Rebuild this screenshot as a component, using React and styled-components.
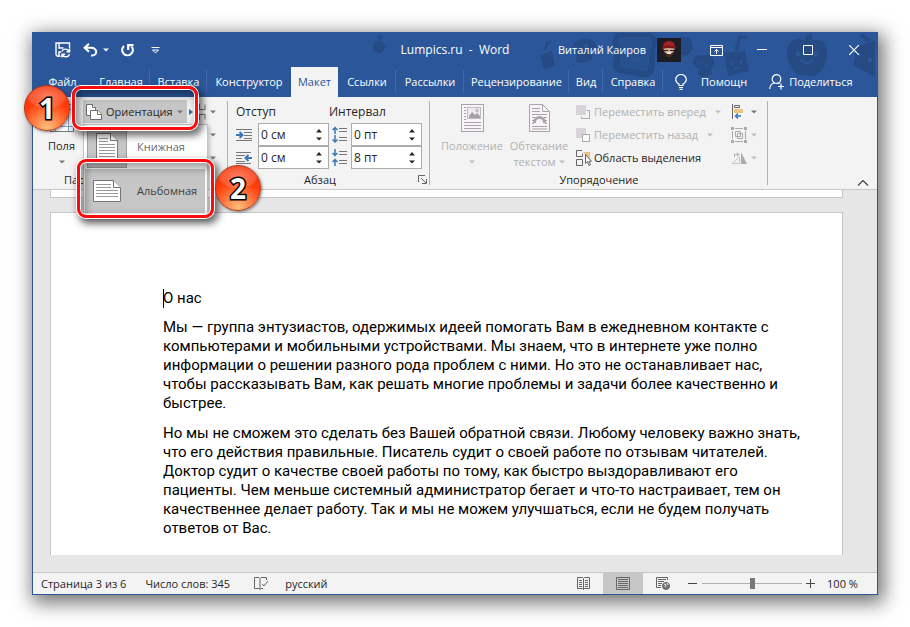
import React, { useState } from 'react'
import styled, { createGlobalStyle, css } from 'styled-components';

const GlobalStyle = createGlobalStyle`
    * { box-sizing: border-box; }
    body {
        margin: 0;
        background: #fff;
        font-family: "Open Sans", "Noto Sans", sans-serif;
        font-size: 11px;
        line-height: 16px;
        color: #262626;
    }
    button, input {
        font: inherit;
        color: inherit;
        margin: 0;
        padding: 0;
        border: none;
        background: none;
    }
    svg { display: block; flex: none; }
    p, h1 { margin: 0; font: inherit; }
`;

const Desktop = styled.div`
    padding: 32px;
`;

const Window = styled.div`
    display: flex;
    flex-direction: column;
    border: 1px solid #2b579a;
    background: #e6e6e6;
    box-shadow: 3px 5px 18px 3px rgba(0, 0, 0, 0.55);
`;

const Header = styled.header`
    position: relative;
    background: #2b579a;
    color: white;
`;

const Pattern = styled.svg`
    position: absolute;
    top: 0;
    right: 0;
`;

const TitleBar = styled.div`
    position: relative;
    display: grid;
    grid-template-columns: 1fr auto 1fr;
    align-items: center;
    height: 34px;
`;

const DocTitle = styled.span`
    font-size: 12px;
`;

const QuickAccess = styled.div`
    display: flex;
    align-items: center;
    padding-left: 20px;
`;

const QuickButton = styled.button`
    display: flex;
    align-items: center;
    justify-content: center;
    gap: 5px;
    width: ${props => props.$width || '32px'};
    height: 30px;
`;

const WindowSide = styled.div`
    display: flex;
    align-items: center;
    justify-content: flex-end;
`;

const Avatar = styled.svg`
    margin: 0 12px 0 11px;
`;

const CaptionButton = styled.button`
    display: flex;
    align-items: center;
    justify-content: center;
    width: 46px;
    height: 32px;
`;

const Tabs = styled.nav`
    position: relative;
    display: flex;
    height: 30px;
`;

const Tab = styled.button`
    position: relative;
    width: ${props => props.$width}px;
    white-space: nowrap;

    ${props => props.$line && css`
        &::after {
            content: '';
            position: absolute;
            right: 0;
            top: 3px;
            height: 22px;
            border-right: 1px solid #416aa8;
        }
    `}

    ${props => props.$active && css`
        background: #f3f3f3;
        color: #2b579a;
    `}
`;

const TabAction = styled.button`
    display: flex;
    align-items: center;
    gap: ${props => props.$gap};
    padding-left: ${props => props.$left};
    white-space: nowrap;
`;

const Ribbon = styled.div`
    display: flex;
    height: 93px;
    background: #f3f3f3;
    border-bottom: 1px solid #c6c6c6;
`;

const Group = styled.section`
    position: relative;
    display: flex;
    flex-direction: column;
    width: ${props => props.$width}px;
    padding-top: 3px;

    &::after {
        content: '';
        position: absolute;
        right: 0;
        top: 4px;
        height: 84px;
        border-right: 1px solid #b1b1b1;
    }
`;

const GroupBody = styled.div`
    display: flex;
    height: 72px;
    padding-left: ${props => props.$left || '0'};
`;

const GroupFooter = styled.div`
    position: relative;
    display: flex;
    justify-content: center;
    align-items: center;
    height: 18px;
    padding-right: ${props => props.$right || '0'};
`;

const Launcher = styled.button`
    position: absolute;
    right: 3px;
    top: 4px;
`;

const BigButton = styled.button`
    display: flex;
    flex-direction: column;
    align-items: center;
    width: ${props => props.$width}px;
    padding-top: 4px;
    white-space: nowrap;
    color: ${props => (props.disabled ? '#b1b1b1' : '#262626')};
`;

const BigIcon = styled.span`
    height: 34px;
`;

const BigArrow = styled.span`
    display: flex;
    align-items: center;
    gap: 3px;
    height: 16px;
`;

const Column = styled.div`
    display: flex;
    flex-direction: column;
    width: ${props => props.$width}px;
    margin-left: ${props => props.$left || '0'};
`;

const SmallButton = styled.button`
    display: flex;
    align-items: center;
    gap: ${props => props.$gap || '4px'};
    height: 23px;
    white-space: nowrap;
    color: ${props => (props.disabled ? '#b1b1b1' : '#262626')};
`;

const ArrowSlot = styled.span`
    margin-left: 5px;
`;

const BreakSpace = styled.span`
    width: 21px;
`;

const MenuAnchor = styled.div`
    position: relative;
    z-index: 3;
`;

const OrientationButton = styled(SmallButton)`
    width: 104px;
    padding-left: 3px;
    background: #c6c6c6;
`;

const Menu = styled.div`
    position: absolute;
    top: 24px;
    left: 0;
    width: 125px;
    padding: 0 2px 4px 1px;
    background: white;
    border: 1px solid #c6c6c6;
    box-shadow: 2px 2px 4px rgba(0, 0, 0, 0.2);
`;

const MenuItem = styled.button`
    display: flex;
    align-items: center;
    gap: 10px;
    width: 100%;
    height: 44px;
    padding-left: 2px;
    white-space: nowrap;
    color: ${props => (props.$hover ? '#404040' : '#6a6a6a')};
    background: ${props => (props.$hover ? '#c6c6c6' : 'white')};
`;

const MenuIcon = styled.span`
    display: flex;
    align-items: center;
    justify-content: center;
    width: 40px;
    height: 42px;
    background: #c6c6c6;
    border: 1px solid ${props => (props.$current ? '#a0a0a0' : '#c6c6c6')};
`;

const Callout = styled.div`
    position: absolute;
    z-index: 4;
    left: ${props => props.$left}px;
    top: ${props => props.$top}px;
    width: ${props => props.$width}px;
    height: ${props => props.$height}px;
    border: 3px solid #f80c0c;
    border-radius: 9px;
    pointer-events: none;
    box-shadow: 0 0 0 1px white, 3px 4px 7px 2px rgba(0, 0, 0, 0.55),
        inset 0 0 0 1px white, inset 3px 4px 8px 2px rgba(0, 0, 0, 0.4);
`;

const Badge = styled.span`
    position: absolute;
    left: ${props => props.$left}px;
    top: ${props => props.$top}px;
    display: flex;
    align-items: center;
    justify-content: center;
    width: 46px;
    height: 46px;
    border-radius: 50%;
    border: 1px solid #b5371c;
    color: white;
    font-size: 28px;
    font-weight: 700;
    -webkit-text-stroke: 3px black;
    paint-order: stroke fill;
    background:
        radial-gradient(ellipse 20px 12px at 50% 24%, rgba(255, 255, 255, 0.35), rgba(255, 255, 255, 0.15) 90%, transparent),
        radial-gradient(circle at 50% 95%, #ffc07c 0, #ff8248 28%, #ff3d0a 58%, #ee2c05 100%);
    box-shadow: 1px 1px 3px rgba(0, 0, 0, 0.5);
`;

const Spacing = styled.div`
    display: grid;
    grid-template-columns: 22px 71px 22px 71px;
    grid-template-rows: 23px 23px 23px;
    align-items: center;
`;

const SpacingTitle = styled.span`
    grid-column: span 2;
    font-size: 12px;
`;

const LineGapCell = styled.span`
    padding-left: 3px;
`;

const SpinBox = styled.div`
    display: flex;
    height: 23px;
    border: 1px solid #ababab;
    background: white;
    font-size: 12px;

    input {
        width: 57px;
        padding-left: 2px;
        outline: none;
    }
`;

const SpinArrows = styled.div`
    display: flex;
    flex-direction: column;
    justify-content: space-between;
    padding: 4px 0;

    button {
        display: block;
        width: 12px;
        height: 5px;
        line-height: 0;
    }
`;

const Collapse = styled.button`
    align-self: flex-end;
    margin: 0 8px 3px auto;
`;

const DocArea = styled.main`
    padding: 0 34px 17px 17px;
`;

const PrevPage = styled.div`
    height: 8px;
    background: white;
    border: 1px solid #c6c6c6;
    border-top: none;
`;

const Page = styled.article`
    margin-top: 14px;
    padding: 76px 56px 17px 112px;
    background: white;
    border: 1px solid #c6c6c6;
    border-bottom: none;
    color: #000;
    font-family: Roboto, "Noto Sans", sans-serif;
    font-size: 15px;
    line-height: 19px;
    white-space: nowrap;

    p { margin-top: 11px; }
    h1 + p { margin-top: 10px; }
`;

const Caret = styled.span`
    position: absolute;
    height: 19px;
    border-left: 1px solid black;
`;

const StatusBar = styled.footer`
    display: flex;
    align-items: center;
    height: 22px;
    padding: 0 19px 0 8px;
    background: #f3f3f3;
    border-top: 1px solid #c6c6c6;
    white-space: nowrap;
`;

const StatusItem = styled.button`
    margin-right: ${props => props.$right || '19px'};
    text-align: left;
`;

const ViewButton = styled.button`
    display: flex;
    align-items: center;
    justify-content: center;
    width: 40px;
    height: 21px;
    background: ${props => (props.$active ? '#c6c6c6' : 'transparent')};
`;

const ViewButtons = styled.div`
    display: flex;
    margin-left: auto;
`;

const ZoomButton = styled.button`
    width: 9px;
    margin-left: ${props => props.$left};
`;

const ZoomRange = styled.input`
    appearance: none;
    width: 100px;
    height: 12px;
    margin-left: 5px;
    background: linear-gradient(#b1b1b1, #b1b1b1) center / 100% 1px no-repeat;

    &::-webkit-slider-thumb {
        appearance: none;
        width: 5px;
        height: 11px;
        background: #777;
    }
`;

const ZoomValue = styled.button`
    width: 31px;
    margin-left: 12px;
`;

const Down = ({ color = '#777' }) => (
    <svg width="6" height="4" viewBox="0 0 6 4"><path d="M0 0.5h6L3 3.5z" fill={color} /></svg>
);

const SaveIcon = () => (
    <svg width="16" height="16" viewBox="0 0 16 16" fill="none" stroke="white" strokeWidth="1.4">
        <path d="M5.5 14.3H2.5L1 12.8V1h13.5v5" />
        <path d="M4 1v5h4.5M4 14v-4h2" />
        <path d="M6.8 9.6a4 4 0 0 1 7.2-.4M14.6 6.4v3.4h-3.2M14.6 12.2a4 4 0 0 1-7.2.6M7 15.6v-3.4h3.2" />
    </svg>
);

const UndoIcon = () => (
    <svg width="15" height="14" viewBox="0 0 15 14" fill="none" stroke="white" strokeWidth="2">
        <path d="M6 0.8L1.6 4.8 6 8.8M2 4.8h6.5a4.6 3.8 0 0 1 0 7.8H8" />
    </svg>
);

const RedoIcon = () => (
    <svg width="15" height="15" viewBox="0 0 15 15" fill="none" stroke="white" strokeWidth="2.2">
        <path d="M4 3A5.3 5.3 0 1 0 11.6 3.6" />
        <path d="M8.2 7V2.1h5.3" />
    </svg>
);

const CustomizeIcon = () => (
    <svg width="9" height="7" viewBox="0 0 9 7" fill="none" stroke="white"><path d="M0.5 0.5h8M1.5 3l3 3 3-3z" /></svg>
);

const BackPattern = () => (
    <Pattern width="510" height="46" viewBox="368 33 510 46" fill="#254a84" stroke="none" aria-hidden="true">
        <circle cx="380" cy="47" r="6" /><path d="M379 35l5 1-3 6z" />
        <path d="M541 55l12-4 3 14-11 5z" /><path d="M545 50l2-8 5-1v2l-3 1-2 7z" />
        <path d="M574 44q8-8 19-4 9 6 1 12l-1 7q-10 6-16 3l1-9q-6-4-4-9z" />
        <path d="M617 33h34q10 5 5 17l-1 22q-4 7-12 5l-23-4q-8-3-6-12l3-11q-6-9 0-17z" />
        <path d="M620 37h30q6 5 2 12l-2 18q-2 6-9 4l-16-3q-6-2-4-9l3-10q-8-6-4-12z" fill="#2b579a" opacity="0.55" />
        <path d="M680 38q12-4 14 8-1 9-9 10l-4-2z" />
        <path d="M694 60q3-7 10-4 9-4 11 5 0 5-3 7l1 6q-7 5-14 1l1-6q-7-3-6-9z" />
        <path d="M725 53l21-2 4 20-21 5z" /><path d="M735 51l5-16 8 1-1 3-5-1-3 13z" />
        <path d="M790 44q7-8 16-3 0-6 7-8l1 5-4 4q10-5 17 3 4 19-8 29-4 4-12 1-10 2-16-9-6-12-1-22z" />
        <path d="M858 47l18-6v36l-22-12zM868 42l-7-6 2-3 10 7z" />
        <g fill="#2b579a">
            <circle cx="577" cy="49" r="2" /><circle cx="587" cy="46" r="2" />
            <circle cx="631" cy="50" r="2.5" /><circle cx="644" cy="52" r="2.5" />
            <circle cx="700" cy="64" r="1.5" /><circle cx="708" cy="66" r="1.5" />
            <circle cx="733" cy="64" r="1.5" /><circle cx="742" cy="62" r="1.5" />
            <circle cx="799" cy="54" r="2.5" /><circle cx="817" cy="54" r="2.5" />
            <circle cx="861" cy="55" r="2" /><circle cx="871" cy="60" r="2" />
        </g>
        <path d="M802 60q6 6 12 0M634 58q4 4 8 1M735 68q3 2 6-1" fill="none" stroke="#2b579a" strokeWidth="2" />
    </Pattern>
);

const UserPicture = () => (
    <Avatar width="24" height="24" viewBox="0 0 24 24" aria-hidden="true">
        <rect width="24" height="24" fill="#1d1c22" />
        <path d="M6 9q0-6 6-6 6 0 6 6z" fill="#a32424" />
        <path d="M6 10h12l-2 5H8z" fill="#c9a48c" />
        <path d="M5 9q7-3 14 0v2q-7-2-14 0z" fill="#7b1717" />
        <path d="M7 12h4v1H7zM13 12h4v1h-4z" fill="#302424" />
        <path d="M8 15q4-2 8 0l-1 3-3 2-3-2z" fill="#4a2a20" />
        <path d="M9 14q3-1 6 0l-1 2h-4z" fill="#e8dcd4" />
    </Avatar>
);

const MarginsIcon = () => (
    <svg width="24" height="28" viewBox="0 0 24 28" fill="white" stroke="#777">
        <rect x="0.5" y="0.5" width="23" height="27" /><path d="M5.5 1v26M18.5 1v26M1 5.5h22M1 22.5h22" stroke="#7ba3cf" />
    </svg>
);

const PagesIcon = () => (
    <svg width="16" height="16" viewBox="0 0 16 16" fill="white" stroke="#6d6d6d">
        <path d="M0.5 0.5h6l3 3v8h-9z" /><path d="M6.5 0.5v3h3" />
        <path d="M4.5 6.5h7.5l3.5 3.5v5.5h-11z" /><path d="M11.5 6.5v4h4" />
    </svg>
);

const PortraitPage = () => (
    <svg width="22" height="28" viewBox="0 0 22 28" fill="white" stroke="#777">
        <path d="M0.5 0.5h14l7 7v20h-21z" /><path d="M14.5 0.5v7h7" />
        <path d="M3 5.5h9M3 8.5h9M3 11.5h16M3 14.5h16M3 17.5h16M3 20.5h16M3 23.5h16" stroke="#999" />
    </svg>
);

const LandscapePage = () => (
    <svg width="28" height="22" viewBox="0 0 28 22" fill="white" stroke="#777">
        <path d="M0.5 0.5h20l7 7v14h-27z" /><path d="M20.5 0.5v7h7" />
        <path d="M3 4.5h15M3 7.5h15M3 10.5h22M3 13.5h22M3 16.5h22" stroke="#999" />
    </svg>
);

const BreaksIcon = () => (
    <svg width="17" height="16" viewBox="0 0 17 16" fill="none" stroke="#777">
        <path d="M7 5.5h9v-5M10.5 0v5M7 10.5h9v5M10.5 16v-5" /><path d="M0 5l4 3-4 3z" fill="#2f74b5" stroke="none" />
    </svg>
);

const IndentIcon = ({ right }) => (
    <svg width="16" height="14" viewBox="0 0 16 14" fill="none" stroke="#777">
        {right
            ? <path d="M0 1.5h15M0 4.5h9M0 7.5h6M0 10.5h9M0 12.5h15" />
            : <path d="M0 1.5h16M8 4.5h8M8 7.5h8M8 10.5h8M0 12.5h16" />}
        {right
            ? <path d="M16 7h-6M12.5 4L9.5 7l3 3" stroke="#3a78b8" strokeWidth="2" />
            : <path d="M0 7h6M3.5 4l3 3-3 3" stroke="#3a78b8" strokeWidth="2" />}
    </svg>
);

const LineGapIcon = ({ after }) => (
    <svg width="16" height="18" viewBox="0 0 16 18" fill="none" stroke="#777">
        <path d="M7 2.5h8M7 5.5h8M7 11.5h8M7 14.5h8" />
        {after
            ? <path d="M3 0v6.5M0.5 4L3 6.5 5.5 4M3 17v-6.5M0.5 13L3 10.5 5.5 13" stroke="#3a78b8" strokeWidth="1.5" />
            : <path d="M3 8V1.5M0.5 4L3 1.5 5.5 4M3 9v7M0.5 13.5L3 16l2.5-2.5" stroke="#3a78b8" strokeWidth="1.5" />}
    </svg>
);

const PositionIcon = () => (
    <svg width="23" height="28" viewBox="0 0 23 28" fill="none" stroke="#aaa4aa">
        <rect x="0.5" y="0.5" width="22" height="27" fill="#f7f3f7" />
        <path d="M3 3.5h2M3 6.5h2M3 9.5h2M3 12.5h2M3 15.5h2M3 18.5h17M3 21.5h17M3 24.5h17" />
        <rect x="6.5" y="3.5" width="13" height="11" fill="#f0ebf0" stroke="#c0bbc0" />
        <path d="M8 14v-2l3-4 3 3 2-2 3 3v2z" fill="#a5a0a5" stroke="none" /><circle cx="16" cy="6.5" r="1.3" />
    </svg>
);

const WrapIcon = () => (
    <svg width="21" height="28" viewBox="0 0 21 28" fill="none" stroke="#aaa4aa">
        <path d="M0.5 0.5h13l7 7v20h-20z" fill="#f7f3f7" /><path d="M13.5 0.5v7h7" />
        <path d="M3 4.5h8M3 7.5h8M3 10.5h15M3 13.5h3M15 13.5h3M3 16.5h2M16 16.5h2M3 19.5h2M16 19.5h2M3 22.5h15M3 25h15" />
        <path d="M5.5 19v-1a5 4.5 0 0 1 10 0v1" strokeWidth="3" stroke="#aaa5aa" />
    </svg>
);

const ForwardIcon = () => (
    <svg width="14" height="14" viewBox="0 0 14 14" fill="none">
        <path d="M13.5 5.5v8h-8v-2M10.5 5.5h3" stroke="#aaa" /><rect width="10" height="10" fill="#d9d3d9" />
    </svg>
);

const BackwardIcon = () => (
    <svg width="14" height="14" viewBox="0 0 14 14" fill="none">
        <rect width="10" height="10" fill="#d9d3d9" /><rect x="6.5" y="6.5" width="7" height="7" fill="#f8f8f8" stroke="#aaa" />
    </svg>
);

const SelectionIcon = () => (
    <svg width="16" height="16" viewBox="0 0 16 16" fill="none" stroke="#666">
        <path d="M6 0.5H0.5v6h6v-3M0.5 9.5h6v6h-6z" /><path d="M7 2h7v7h-3L9 4z" fill="#ecc27c" stroke="none" />
        <path d="M9.5 4.5v9l2-2 1.5 4 1.5-.7-1.5-3.5h2.5z" fill="white" stroke="#555" strokeWidth="0.9" />
    </svg>
);

const AlignIcon = () => (
    <svg width="16" height="15" viewBox="0 0 16 15" fill="none" stroke="#666">
        <path d="M1.5 0v15M3.5 1.5h5v2h-5z" /><path d="M3 5h9v4H3z" fill="#ecc27c" stroke="none" />
        <path d="M10 12H4.5M7 9.5L4.5 12 7 14.5" stroke="#3a78b8" strokeWidth="1.5" />
    </svg>
);

const GroupIcon = () => (
    <svg width="16" height="16" viewBox="0 0 16 16" fill="none" stroke="#aaa">
        <path d="M4 1.5h8M4 14.5h8M1.5 4v8M14.5 4v8M4.5 4.5h5v5h-5zM6.5 6.5h5v5h-5z" />
        <path d="M0 0h3v3H0zM13 0h3v3h-3zM0 13h3v3H0zM13 13h3v3h-3z" fill="#aaa" stroke="none" />
    </svg>
);

const RotateIcon = () => (
    <svg width="16" height="12" viewBox="0 0 16 12" fill="none" stroke="#aaa">
        <path d="M1 11.5h7.5V5z" stroke="#c9c3c9" /><path d="M10 0l6 12h-6z" fill="#aaa" stroke="none" />
        <path d="M3.5 5V2.5h4M6 0.5l2 2-2 2" />
    </svg>
);

const TABS = [
    { name: 'Файл', width: 59 },
    { name: 'Главная', width: 58, line: true },
    { name: 'Вставка', width: 57, line: true },
    { name: 'Конструктор', width: 84 },
    { name: 'Макет', width: 47 },
    { name: 'Ссылки', width: 58, line: true },
    { name: 'Рассылки', width: 68, line: true },
    { name: 'Рецензирование', width: 105, line: true },
    { name: 'Вид', width: 34, line: true },
    { name: 'Справка', width: 60, line: true },
];

const SpinField = ({ label, start, unit }) => {
    const [value, setValue] = useState(start);

    return (
        <SpinBox>
            <input aria-label={label} value={`${value} ${unit}`} onChange={e => setValue(parseInt(e.target.value) || 0)} />
            <SpinArrows>
                <button aria-label="Больше" onClick={() => setValue(value + 1)}>
                    <svg width="6" height="4" viewBox="0 0 6 4"><path d="M0 3.5h6L3 0z" fill="#262626" /></svg>
                </button>
                <button aria-label="Меньше" onClick={() => setValue(value - 1)}><Down color="#262626" /></button>
            </SpinArrows>
        </SpinBox>
    );
};

const App = () => {
    const [tab, setTab] = useState('Макет');
    const [zoom, setZoom] = useState(100);

    return (
        <Desktop>
            <GlobalStyle />
            <Window>
                <Header>
                    <BackPattern />
                    <TitleBar>
                        <QuickAccess>
                            <QuickButton $width="20px" aria-label="Сохранить"><SaveIcon /></QuickButton>
                            <QuickButton $width="46px" aria-label="Отменить"><UndoIcon /><Down color="white" /></QuickButton>
                            <QuickButton $width="16px" aria-label="Повторить"><RedoIcon /></QuickButton>
                            <QuickButton $width="41px" aria-label="Настройка панели"><CustomizeIcon /></QuickButton>
                        </QuickAccess>
                        <DocTitle>Lumpics.ru&nbsp; -&nbsp; Word</DocTitle>
                        <WindowSide>
                            <span>Виталий Каиров</span>
                            <UserPicture />
                            <CaptionButton aria-label="Параметры ленты">
                                <svg width="13" height="11" viewBox="0 0 13 11" fill="none" stroke="white"><path d="M0.5 0.5h12v10H0.5zM0.5 2.5h12M6.5 9V4.5M4.5 6.5l2-2 2 2" /></svg>
                            </CaptionButton>
                            <CaptionButton aria-label="Свернуть">
                                <svg width="10" height="10" viewBox="0 0 10 10" stroke="white"><path d="M0 4.5h10" /></svg>
                            </CaptionButton>
                            <CaptionButton aria-label="Развернуть">
                                <svg width="10" height="10" viewBox="0 0 10 10" fill="none" stroke="white"><path d="M0.5 0.5h9v9h-9z" /></svg>
                            </CaptionButton>
                            <CaptionButton aria-label="Закрыть">
                                <svg width="10" height="10" viewBox="0 0 10 10" stroke="white" strokeWidth="1.2"><path d="M0 0l10 10M10 0L0 10" /></svg>
                            </CaptionButton>
                        </WindowSide>
                    </TitleBar>
                    <Tabs>
                        {TABS.map(t => (
                            <Tab key={t.name} $width={t.width} $line={t.line} $active={tab === t.name} onClick={() => setTab(t.name)}>
                                {t.name}
                            </Tab>
                        ))}
                        <TabAction $left="12px" $gap="14px">
                            <svg width="12" height="16" viewBox="0 0 12 16" fill="none" stroke="white" strokeWidth="1.2">
                                <path d="M4 11.5V10Q0.7 8 0.7 5.5a5.3 5 0 0 1 10.6 0Q11.3 8 8 10v1.5zM4 13.5h4M4.5 15.4h3" />
                            </svg>
                            Помощн
                        </TabAction>
                        <TabAction $left="22px" $gap="4px">
                            <svg width="16" height="16" viewBox="0 0 16 16" fill="none" stroke="white" strokeWidth="1.2">
                                <circle cx="7.5" cy="5" r="4.3" /><path d="M0.7 15q.5-5.5 5-6M9 9q1 .3 1.5 1M12 9.5v6M9 12.5h6" />
                            </svg>
                            Поделиться
                        </TabAction>
                    </Tabs>
                </Header>

                <Ribbon>
                    <Group $width={195}>
                        <GroupBody $left="7px">
                            <BigButton $width={43}>
                                <BigIcon><MarginsIcon /></BigIcon>
                                <span>Поля</span>
                                <BigArrow><Down /></BigArrow>
                            </BigButton>
                            <Column $width={106}>
                                <MenuAnchor>
                                    <OrientationButton aria-expanded="true"><PagesIcon />Ориентация<Down /></OrientationButton>
                                    <Menu>
                                        <MenuItem><MenuIcon $current><PortraitPage /></MenuIcon>Книжная</MenuItem>
                                        <MenuItem $hover><MenuIcon><LandscapePage /></MenuIcon>Альбомная</MenuItem>
                                    </Menu>
                                    <Callout $left={-11} $top={-14} $width={126} $height={44}><Badge $left={-51} $top={-4}>1</Badge></Callout>
                                    <Callout $left={-6} $top={59} $width={137} $height={59}><Badge $left={135} $top={3}>2</Badge></Callout>
                                </MenuAnchor>
                            </Column>
                            <Column $width={30}>
                                <SmallButton aria-label="Разрывы"><BreaksIcon /><Down /></SmallButton>
                                <SmallButton $gap="0" aria-label="Номера строк"><BreakSpace /><Down /></SmallButton>
                                <SmallButton $gap="0" aria-label="Расстановка переносов"><BreakSpace /><Down /></SmallButton>
                            </Column>
                        </GroupBody>
                        <GroupFooter $right="16px">Параметры страницы</GroupFooter>
                    </Group>

                    <Group $width={202}>
                        <GroupBody $left="8px">
                            <Spacing>
                                <SpacingTitle>Отступ</SpacingTitle>
                                <SpacingTitle>Интервал</SpacingTitle>
                                <IndentIcon />
                                <SpinField label="Отступ слева" start={0} unit="см" />
                                <LineGapCell><LineGapIcon /></LineGapCell>
                                <SpinField label="Интервал до" start={0} unit="пт" />
                                <IndentIcon right />
                                <SpinField label="Отступ справа" start={0} unit="см" />
                                <LineGapCell><LineGapIcon after /></LineGapCell>
                                <SpinField label="Интервал после" start={8} unit="пт" />
                            </Spacing>
                        </GroupBody>
                        <GroupFooter $right="18px">
                            Абзац
                            <Launcher aria-label="Параметры абзаца">
                                <svg width="9" height="9" viewBox="0 0 9 9" fill="none" stroke="#666"><path d="M0.5 7V0.5H7M3 3l5 5M8.5 4v4.5H4" /></svg>
                            </Launcher>
                        </GroupFooter>
                    </Group>

                    <Group $width={338}>
                        <GroupBody $left="8px">
                            <BigButton $width={68} disabled>
                                <BigIcon><PositionIcon /></BigIcon>
                                <span>Положение</span>
                                <BigArrow><Down color="#c0c0c0" /></BigArrow>
                            </BigButton>
                            <BigButton $width={66} disabled>
                                <BigIcon><WrapIcon /></BigIcon>
                                <span>Обтекание</span>
                                <BigArrow>текстом <Down color="#c0c0c0" /></BigArrow>
                            </BigButton>
                            <Column $width={155} $left="4px">
                                <SmallButton disabled><ForwardIcon />Переместить вперед<ArrowSlot><Down color="#c0c0c0" /></ArrowSlot></SmallButton>
                                <SmallButton disabled><BackwardIcon />Переместить назад<ArrowSlot><Down color="#c0c0c0" /></ArrowSlot></SmallButton>
                                <SmallButton $gap="2px"><SelectionIcon />Область выделения</SmallButton>
                            </Column>
                            <Column $width={26}>
                                <SmallButton aria-label="Выровнять"><AlignIcon /><Down /></SmallButton>
                                <SmallButton aria-label="Группировать" disabled><GroupIcon /><Down color="#c0c0c0" /></SmallButton>
                                <SmallButton aria-label="Повернуть" disabled><RotateIcon /><Down color="#c0c0c0" /></SmallButton>
                            </Column>
                        </GroupBody>
                        <GroupFooter>Упорядочение</GroupFooter>
                    </Group>
                    <Collapse aria-label="Свернуть ленту">
                        <svg width="12" height="6" viewBox="0 0 12 6" fill="none" stroke="#444" strokeWidth="1.2"><path d="M1 5.5l5-5 5 5" /></svg>
                    </Collapse>
                </Ribbon>

                <DocArea>
                    <PrevPage />
                    <Page>
                        <h1><Caret />О нас</h1>
                        <p>
                            Мы — группа энтузиастов, одержимых идеей помогать Вам в ежедневном контакте с<br />
                            компьютерами и мобильными устройствами. Мы знаем, что в интернете уже полно<br />
                            информации о решении разного рода проблем с ними. Но это не останавливает нас,<br />
                            чтобы рассказывать Вам, как решать многие проблемы и задачи более качественно и<br />
                            быстрее.
                        </p>
                        <p>
                            Но мы не сможем это сделать без Вашей обратной связи. Любому человеку важно знать,<br />
                            что его действия правильные. Писатель судит о своей работе по отзывам читателей.<br />
                            Доктор судит о качестве своей работы по тому, как быстро выздоравливают его<br />
                            пациенты. Чем меньше системный администратор бегает и что-то настраивает, тем он<br />
                            качественнее делает работу. Так и мы не можем улучшаться, если не будем получать<br />
                            ответов от Вас.
                        </p>
                    </Page>
                </DocArea>

                <StatusBar>
                    <StatusItem>Страница 3 из 6</StatusItem>
                    <StatusItem $right="24px">Число слов: 345</StatusItem>
                    <StatusItem $right="17px" aria-label="Правописание">
                        <svg width="14" height="13" viewBox="0 0 14 13" fill="none" stroke="#666"><path d="M9 11.5H7l-1 1-1-1H0.5v-11H5l1 1 1-1h5.5V3M6 1.5v11M8 7l2 2 4-5" /></svg>
                    </StatusItem>
                    <StatusItem>русский</StatusItem>
                    <ViewButtons>
                        <ViewButton aria-label="Режим чтения">
                            <svg width="13" height="13" viewBox="0 0 13 13" fill="none" stroke="#666"><path d="M6.5 12.5V1.5L5.5.5h-5v11h5l1 1 1-1h5v-11h-5l-1 1M2 3.5h3M2 5.5h3M2 7.5h3M2 9.5h3M8 3.5h3M8 5.5h3M8 7.5h3M8 9.5h3" /></svg>
                        </ViewButton>
                        <ViewButton $active aria-label="Разметка страницы">
                            <svg width="14" height="13" viewBox="0 0 14 13" fill="none" stroke="#666"><path d="M0.5 0.5h13v12h-13zM2 2.5h10M2 4.5h10M2 6.5h10M2 8.5h10M2 10.5h10" /></svg>
                        </ViewButton>
                        <ViewButton aria-label="Веб-документ">
                            <svg width="14" height="13" viewBox="0 0 14 13" fill="none" stroke="#666"><path d="M5 10.5H0.5v-10h11V3M2 2.5h8M2 4.5h6M2 6.5h4M2 8.5h3" /><circle cx="10" cy="9" r="3.5" fill="#777" /><path d="M8 7l2 1-1 2M11 6l1 2" stroke="#eee" /></svg>
                        </ViewButton>
                    </ViewButtons>
                    <ZoomButton $left="5px" aria-label="Уменьшить" onClick={() => setZoom(zoom - 10)}>
                        <svg width="9" height="9" viewBox="0 0 9 9" stroke="#444"><path d="M0 4.5h9" /></svg>
                    </ZoomButton>
                    <ZoomRange type="range" min="0" max="200" value={zoom} onChange={e => setZoom(Number(e.target.value))} aria-label="Масштаб" />
                    <ZoomButton $left="4px" aria-label="Увеличить" onClick={() => setZoom(zoom + 10)}>
                        <svg width="9" height="9" viewBox="0 0 9 9" stroke="#444"><path d="M0 4.5h9M4.5 0v9" /></svg>
                    </ZoomButton>
                    <ZoomValue>{zoom} %</ZoomValue>
                </StatusBar>
            </Window>
        </Desktop>
    );
};

export default App
